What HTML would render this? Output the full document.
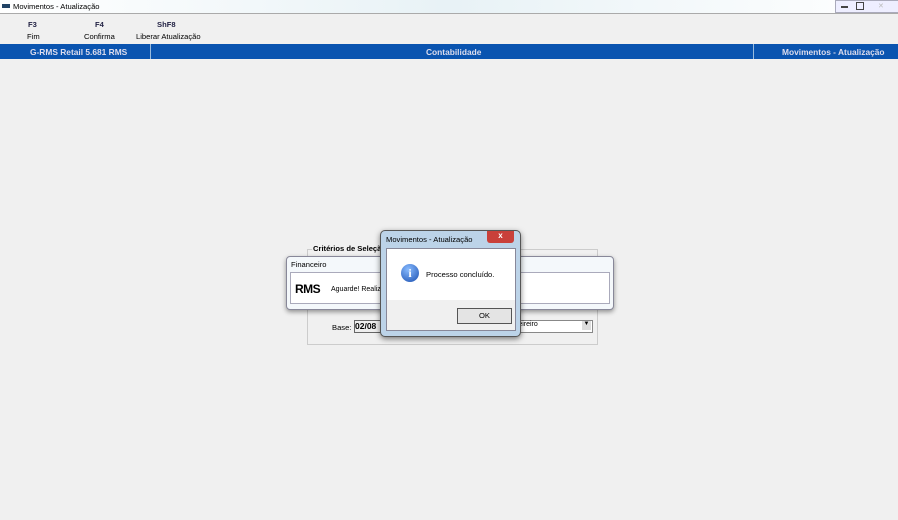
<!DOCTYPE html>
<html><head><style>
body{margin:0;width:898px;height:520px;background:#f0f0f0;font-family:"Liberation Sans",sans-serif;font-size:7.6px;position:relative;overflow:hidden}
.a{position:absolute}
.h{color:#dde;font-weight:bold;font-size:8.4px}
</style></head><body>
<div class="a" style="left:0;top:0;width:898px;height:13px;background:linear-gradient(90deg,#fff 0,#e8f2f6 50%,#fff 100%);border-bottom:1px solid #aaa"></div>
<div class="a" style="left:2px;top:4px;width:8px;height:4px;background:#246"></div>
<div class="a" style="left:13px;top:2px;color:#000">Movimentos - Atualização</div>
<div class="a" style="left:835px;top:0;width:62px;height:11px;border:1px solid #aab;background:#eef"></div>
<div class="a" style="left:841px;top:6px;width:7px;height:2px;background:#444"></div>
<div class="a" style="left:856px;top:2px;width:6px;height:6px;border:1px solid #444"></div>
<div class="a" style="left:878px;top:2px;color:#bbb;font-size:7px">✕</div>
<div class="a" style="left:28px;top:20px;font-weight:bold;color:#224">F3</div>
<div class="a" style="left:27px;top:32px">Fim</div>
<div class="a" style="left:95px;top:20px;font-weight:bold;color:#224">F4</div>
<div class="a" style="left:84px;top:32px">Confirma</div>
<div class="a" style="left:157px;top:20px;font-weight:bold;color:#224">ShF8</div>
<div class="a" style="left:136px;top:32px">Liberar Atualização</div>
<div class="a" style="left:0;top:44px;width:898px;height:15px;background:#0a54b0"></div>
<div class="a" style="left:150px;top:44px;width:1px;height:15px;background:#9bd"></div>
<div class="a" style="left:753px;top:44px;width:1px;height:15px;background:#9bd"></div>
<div class="a h" style="left:30px;top:47px">G-RMS Retail 5.681 RMS</div>
<div class="a h" style="left:426px;top:47px">Contabilidade</div>
<div class="a h" style="left:782px;top:47px">Movimentos - Atualização</div>
<div class="a" style="left:307px;top:249px;width:289px;height:94px;border:1px solid #ccc"></div>
<div class="a" style="left:312px;top:244px;background:#f0f0f0;font-weight:bold;padding:0 1px">Critérios de Seleção</div>
<div class="a" style="left:332px;top:323px">Base:</div>
<div class="a" style="left:354px;top:320px;width:30px;height:11px;border:1px solid #666;background:#eee;font-weight:bold;font-size:8.5px">02/08</div>
<div class="a" style="left:515px;top:320px;width:76px;height:11px;border:1px solid #888;background:#fff;font-size:7px">reireiro</div>
<div class="a" style="left:582px;top:321px;width:9px;height:9px;background:#ddd;font-size:6px;text-align:center">▼</div>
<div class="a" style="left:286px;top:256px;width:326px;height:52px;border:1px solid #889;border-radius:4px;background:#f4f8fb;box-shadow:0 2px 5px rgba(0,0,0,.4)"></div>
<div class="a" style="left:291px;top:260px">Financeiro</div>
<div class="a" style="left:290px;top:272px;width:318px;height:30px;border:1px solid #aab;background:#fff"></div>
<div class="a" style="left:295px;top:282px;font-weight:bold;font-size:12px;letter-spacing:-0.5px">RMS</div>
<div class="a" style="left:331px;top:286px;font-size:7px">Aguarde! Realiz</div>
<div class="a" style="left:380px;top:230px;width:139px;height:105px;border:1px solid #555;border-radius:5px;background:#bcd3e8;box-shadow:0 2px 6px rgba(0,0,0,.5)"></div>
<div class="a" style="left:386px;top:235px">Movimentos - Atualização</div>
<div class="a" style="left:487px;top:231px;width:27px;height:12px;background:#c9403a;border-radius:0 0 3px 3px;color:#fff;text-align:center;font-size:8px;font-weight:bold">x</div>
<div class="a" style="left:386px;top:248px;width:128px;height:81px;background:#f0f0f0;border:1px solid #889"></div>
<div class="a" style="left:387px;top:249px;width:128px;height:51px;background:#fff"></div>
<div class="a" style="left:401px;top:264px;width:18px;height:18px;border-radius:50%;background:radial-gradient(circle at 40% 30%,#8bf,#1a4fb0);color:#fff;text-align:center;font:bold 12px/18px 'Liberation Serif',serif">i</div>
<div class="a" style="left:426px;top:270px">Processo concluído.</div>
<div class="a" style="left:457px;top:308px;width:53px;height:14px;border:1px solid #555;background:#e4e4e4;text-align:center;line-height:14px">OK</div>
</body></html>
